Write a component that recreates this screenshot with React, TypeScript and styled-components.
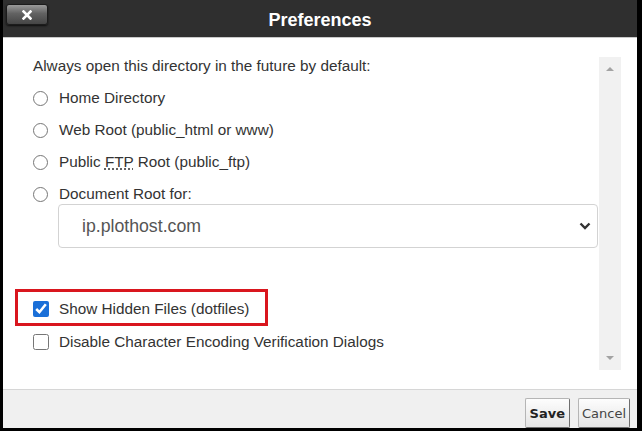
import React, { ReactElement } from "react";
import styled, { createGlobalStyle } from "styled-components";

const GlobalStyle = createGlobalStyle`
  html, body {
    margin: 0;
    padding: 0;
    background: #000;
  }
  body {
    font-family: "Liberation Sans", Arial, sans-serif;
  }
  * {
    box-sizing: border-box;
  }
`;

const Frame = styled.div`
  width: 642px;
  height: 431px;
  background: #000;
  padding: 0 5px 3px 3px;
`;

const Dialog = styled.div`
  height: 100%;
  display: flex;
  flex-direction: column;
  background: #fff;
`;

const TitleBar = styled.div`
  height: 38px;
  flex: none;
  display: grid;
  grid-template-columns: 1fr auto 1fr;
  align-items: start;
  background: #2f2f2f;
  border-bottom: 1px solid #c9c9c9;
`;

const CloseButton = styled.button`
  justify-self: start;
  margin: 4px 0 0 3px;
  width: 42px;
  height: 21px;
  padding: 0;
  display: flex;
  align-items: center;
  justify-content: center;
  border: 1px solid #1c1c1c;
  border-radius: 3px;
  background: linear-gradient(#9a9a9a, #626262 45%, #454545);
  box-shadow: 0 1px 2px rgba(0, 0, 0, 0.7);
`;

const Title = styled.h1`
  margin: 0;
  align-self: center;
  padding-top: 2px;
  font-size: 18px;
  line-height: 22px;
  font-weight: bold;
  color: #fff;
`;

const Body = styled.div`
  flex: 1;
  min-height: 0;
  display: flex;
  gap: 1px;
  padding: 19px 16px 19px 30px;
`;

const Content = styled.div`
  flex: 1;
  display: flex;
  flex-direction: column;
  font-size: 15.3px;
  color: #333;
`;

const Intro = styled.p`
  margin: 0 0 14px;
  line-height: 18px;
`;

const OptionList = styled.div`
  display: flex;
  flex-direction: column;
  gap: 14px;
`;

const OptionRow = styled.label<{ $gap: number }>`
  display: flex;
  align-items: center;
  gap: ${(p) => p.$gap}px;
  height: 18px;
  line-height: 18px;
  white-space: nowrap;
`;

const Radio = styled.input.attrs({ type: "radio" })`
  width: 15px;
  height: 15px;
  margin: 0;
  accent-color: #1a6fd8;
`;

const Checkbox = styled.input.attrs({ type: "checkbox" })`
  width: 16px;
  height: 16px;
  margin: 0;
  accent-color: #1a6fd8;
`;

const Abbr = styled.abbr`
  text-decoration: underline dotted;
  text-underline-offset: 2px;
`;

const SelectBox = styled.div`
  margin: 1px 0 0 25px;
  height: 44px;
  display: flex;
  align-items: center;
  justify-content: space-between;
  padding: 0 6px 0 23px;
  border: 1px solid #d3d3d3;
  border-radius: 4px;
  font-size: 17.7px;
  color: #555;
`;

const Highlight = styled.div`
  margin: 41px 0 0 -18px;
  width: 253px;
  padding: 8px 0 5px 15px;
  border: 3px solid #d9161e;
`;

const PlainRow = styled.div`
  margin-top: 7px;
`;

const Track = styled.div`
  width: 22px;
  flex: none;
  display: flex;
  flex-direction: column;
  justify-content: space-between;
  align-items: center;
  padding: 10px 0;
  background: #f1f1f1;
`;

const Arrow = styled.span<{ $up?: boolean }>`
  width: 0;
  height: 0;
  border-left: 4px solid transparent;
  border-right: 4px solid transparent;
  ${(p) =>
    p.$up ? "border-bottom: 4px solid #a3a3a3;" : "border-top: 4px solid #a3a3a3;"}
`;

const Footer = styled.div`
  height: 39px;
  flex: none;
  display: flex;
  justify-content: flex-end;
  align-items: flex-end;
  gap: 8px;
  padding-right: 7px;
  background: #f0f0f0;
  border-top: 1px solid #d6d6d6;
`;

const Button = styled.button<{ $primary?: boolean }>`
  height: 30px;
  padding: 0 ${(p) => (p.$primary ? 4 : 3)}px;
  font-family: "DejaVu Sans", Verdana, sans-serif;
  font-size: 13px;
  font-weight: ${(p) => (p.$primary ? "bold" : "normal")};
  color: ${(p) => (p.$primary ? "#222" : "#444")};
  background: linear-gradient(#fdfdfd, #e4e4e4);
  border: 1px solid #b5b5b5;
  border-right-color: #6e6e6e;
  border-bottom-color: #6e6e6e;
  border-radius: 2px;
`;

const App = (): ReactElement => {
  return (
    <Frame>
      <GlobalStyle />
      <Dialog>
        <TitleBar>
          <CloseButton aria-label="Close">
            <svg width="10" height="10" viewBox="0 0 10 10">
              <path
                d="M1.5 1.5 L8.5 8.5 M8.5 1.5 L1.5 8.5"
                stroke="#fff"
                strokeWidth="2.6"
                strokeLinecap="square"
              />
            </svg>
          </CloseButton>
          <Title>Preferences</Title>
          <span />
        </TitleBar>
        <Body>
          <Content>
            <Intro>Always open this directory in the future by default:</Intro>
            <OptionList>
              <OptionRow $gap={11}>
                <Radio name="dir" />
                Home Directory
              </OptionRow>
              <OptionRow $gap={11}>
                <Radio name="dir" />
                Web Root (public_html or www)
              </OptionRow>
              <OptionRow $gap={11}>
                <Radio name="dir" />
                <span>
                  Public <Abbr title="File Transfer Protocol">FTP</Abbr> Root
                  (public_ftp)
                </span>
              </OptionRow>
              <OptionRow $gap={11}>
                <Radio name="dir" />
                Document Root for:
              </OptionRow>
            </OptionList>
            <SelectBox role="combobox">
              <span>ip.plothost.com</span>
              <svg width="12" height="8" viewBox="0 0 12 8">
                <path
                  d="M1.5 1.5 L6 6 L10.5 1.5"
                  fill="none"
                  stroke="#333"
                  strokeWidth="2.4"
                />
              </svg>
            </SelectBox>
            <Highlight>
              <OptionRow $gap={10}>
                <Checkbox defaultChecked />
                Show Hidden Files (dotfiles)
              </OptionRow>
            </Highlight>
            <PlainRow>
              <OptionRow $gap={10}>
                <Checkbox />
                Disable Character Encoding Verification Dialogs
              </OptionRow>
            </PlainRow>
          </Content>
          <Track>
            <Arrow $up />
            <Arrow />
          </Track>
        </Body>
        <Footer>
          <Button $primary>Save</Button>
          <Button>Cancel</Button>
        </Footer>
      </Dialog>
    </Frame>
  );
};

export default App;
